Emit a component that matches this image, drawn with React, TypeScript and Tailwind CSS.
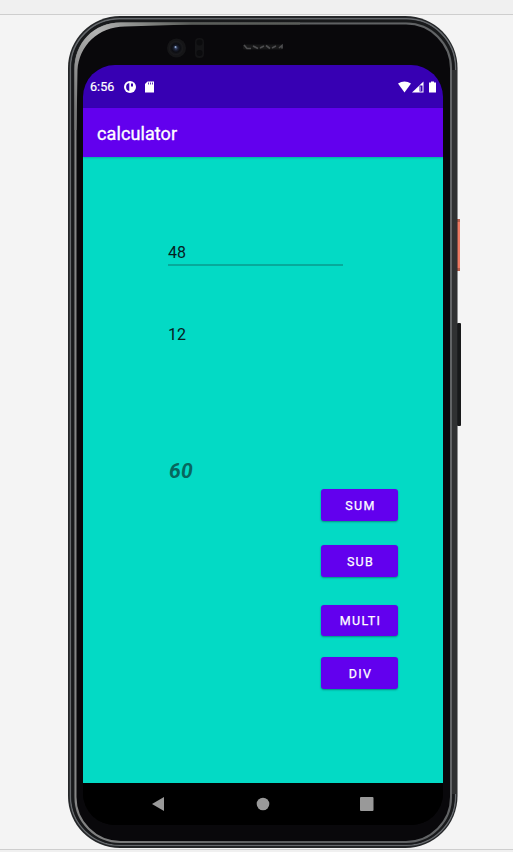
import React from "react";

function PhoneShell() {
  return (
    <svg className="absolute inset-0" width="513" height="852" viewBox="0 0 513 852" aria-hidden="true">
      <defs>
        <linearGradient id="rim" x1="0" y1="0" x2="1" y2="0">
          <stop offset="0" stopColor="#858585" />
          <stop offset="0.5" stopColor="#5c5e60" />
          <stop offset="1" stopColor="#626466" />
        </linearGradient>
        <radialGradient id="lens">
          <stop offset="0" stopColor="#4a5a80" />
          <stop offset="0.3" stopColor="#1b2133" />
          <stop offset="0.6" stopColor="#0c0d12" />
          <stop offset="1" stopColor="#1c1c1e" />
        </radialGradient>
        <linearGradient id="glint" x1="75" y1="110" x2="190" y2="22" gradientUnits="userSpaceOnUse">
          <stop offset="0" stopColor="#777" />
          <stop offset="0.45" stopColor="#b4b4b4" />
          <stop offset="1" stopColor="#5a5d59" />
        </linearGradient>
      </defs>
      <rect x="456" y="219" width="4" height="51.500" fill="#ee7b64" />
      <path d="M456 219h4v3h-4zM456 268h4v3h-4z" fill="#b8604e" />
      <rect x="457" y="323" width="4" height="103" rx="1" fill="#18191a" />
      <rect x="68" y="16" width="389.500" height="832" rx="52" fill="#242628" />
      <rect x="70.500" y="18.800" width="385" height="826.500" rx="49" fill="none" stroke="#66696d" strokeWidth="1.500" />
      <rect x="72.500" y="21" width="381" height="822.500" rx="47" fill="none" stroke="#18191b" strokeWidth="2.500" />
      <rect x="75.500" y="23.500" width="375.500" height="818.500" rx="45" fill="#09080b" stroke="url(#rim)" strokeWidth="2" />
      <path d="M74.500 130V70C74.500 43 93 22.500 121 22.500H300V24.500H190L125 26.500C98 26.500 79 46 77.500 70L76.500 130z" fill="url(#glint)" />
      <path d="M454.500 70v724" stroke="#303132" strokeWidth="5" />
      <circle cx="176.500" cy="48" r="9.500" fill="#151517" />
      <circle cx="176" cy="48" r="7" fill="url(#lens)" />
      <circle cx="175.500" cy="47" r="1" fill="#98b0d8" />
      <rect x="195" y="38" width="9" height="20" rx="4" fill="#141416" />
      <circle cx="199.500" cy="42.500" r="3" fill="#0b0b0d" />
      <circle cx="199.500" cy="53" r="3" fill="#0b0b0d" />
      <rect x="243" y="44.500" width="40" height="5" rx="1.500" fill="#171718" />
      <path d="M244 45l3 3.500h4M253 46l5 2.500M260 48l4-2M266 45.500l4 3M272 48l4-2M279 48l3-2.500v3" stroke="#4d4d4f" strokeWidth="1.600" fill="none" />
    </svg>
  );
}

function StatusBar() {
  return (
    <div className="flex h-[43px] shrink-0 items-center bg-[#3700b3] pl-[7px] pr-[6px] text-white">
      <span className="w-[34px] pt-[2px] text-[12.600px] leading-none [-webkit-text-stroke:0.200px_white]">6:56</span>
      <svg width="12" height="12" viewBox="0 0 12 12" aria-hidden="true">
        <circle cx="6" cy="6" r="6" fill="white" />
        <path d="M5.300 2v8A4.100 4.100 0 0 1 5.300 2zM7 2.500h2v3H7z" fill="#3700b3" />
      </svg>
      <svg className="ml-2" width="11" height="12" viewBox="0 0 11 12" aria-hidden="true">
        <path d="M3.500.5H10v11H1V3z" fill="white" />
        <path d="M4.500 1.500v2M6.500 1.500v2M8.500 1.500v2" stroke="#3700b3" strokeWidth=".8" />
      </svg>
      <svg className="ml-auto" width="39" height="12" viewBox="0 0 39 12" aria-hidden="true">
        <path d="M0 2.500Q6.500-1.500 13 2.500L6.500 11.500z" fill="white" />
        <path d="M14 11.500L25.500.5v11z" fill="white" />
        <path d="M21.500 4.500h3v6h-3z" fill="#3700b3" />
        <path d="M22.500 5.500v5" stroke="#8d70d4" />
        <path d="M31 1.500h2V.5h3v1h2v10h-7z" fill="white" />
      </svg>
    </div>
  );
}

function Operation({ label, className }: { label: string; className: string }) {
  return (
    <button
      className={`block w-[77px] rounded-[3px] bg-[#6200ee] pl-[2px] pt-[2px] text-center text-[12.500px] leading-none tracking-[1.300px] text-white shadow-[0_1px_2px_rgba(0,0,0,0.350)] [-webkit-text-stroke:0.250px_white] ${className}`}
    >
      {label}
    </button>
  );
}

export default function App() {
  return (
    <main className="relative h-[852px] w-[513px] overflow-hidden bg-[#f4f4f4] font-[Roboto,sans-serif]">
      <div className="h-[15px] border-b border-[#cecece] bg-[#f0f0f0]" />
      <PhoneShell />
      <section className="relative ml-[83px] mt-[50px] flex h-[760px] w-[360px] flex-col overflow-hidden rounded-[32px] bg-black">
        <StatusBar />
        <header className="z-10 flex h-[49px] shrink-0 items-center bg-[#6200ee] pl-[14px] pt-[1px] text-[18px] tracking-[0.100px] text-white shadow-[0_1px_2px_rgba(0,0,0,0.200)] [-webkit-text-stroke:0.350px_white]">
          calculator
        </header>
        <div className="h-[626px] shrink-0 bg-[#03dac5] pt-[83px]">
          <div className="ml-[85px] flex h-[26px] w-[175px] items-center border-b-2 border-[#07aa9b] pt-[2px] text-[16px] text-[#07211f]">
            48
          </div>
          <div className="ml-[85px] mt-[56px] flex h-[26px] items-center text-[16px] text-[#07211f]">12</div>
          <output className="ml-[86px] mt-[110px] flex h-[26px] items-center pt-[2px] text-[21px] font-bold italic tracking-[0.200px] text-[#07665e]">
            60
          </output>
          <div className="ml-[238px] mt-[5px]">
            <Operation label="SUM" className="h-[32px]" />
            <Operation label="SUB" className="mt-[24px] h-[32px]" />
            <Operation label="MULTI" className="mt-[28px] h-[31px]" />
            <Operation label="DIV" className="mt-[21px] h-[32px]" />
          </div>
        </div>
        <nav className="flex h-[42px] items-center bg-black">
          <svg width="360" height="42" viewBox="0 0 360 42" fill="#999" aria-hidden="true">
            <path d="M69 21l12-7v14z" />
            <circle cx="180" cy="21" r="6.300" />
            <rect x="277" y="14" width="13.500" height="14" rx="1" />
          </svg>
        </nav>
      </section>
      <div className="mt-[24px] h-[3px] border-t border-[#cecece] bg-[#f0f0f0]" />
    </main>
  );
}
